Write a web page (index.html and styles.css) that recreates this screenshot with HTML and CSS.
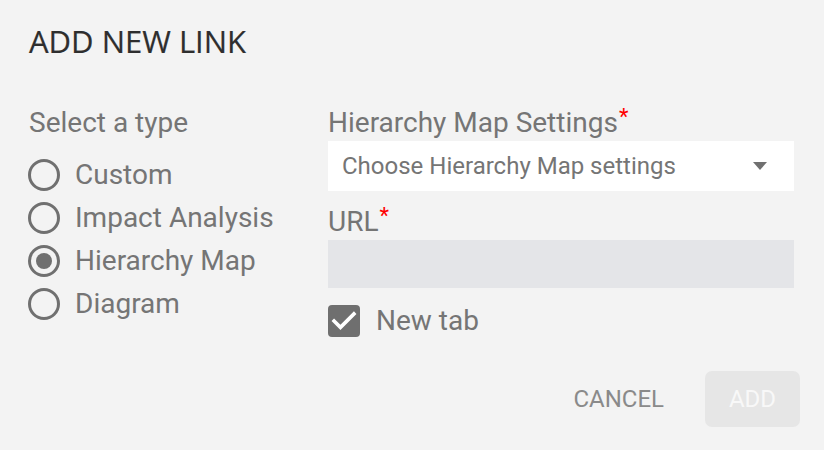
FILE: index.html
```html
<!DOCTYPE html>
<html>
<head>
<meta charset="utf-8">
<link rel="stylesheet" href="styles.css">
</head>
<body>
<div class="dialog">
  <h1 class="title">ADD NEW LINK</h1>
  <div class="content">
    <div class="types">
      <div class="label">Select a type</div>
      <div class="radios">
        <div class="radio-row"><span class="radio"></span><span class="radio-text">Custom</span></div>
        <div class="radio-row"><span class="radio"></span><span class="radio-text">Impact Analysis</span></div>
        <div class="radio-row"><span class="radio checked"></span><span class="radio-text">Hierarchy Map</span></div>
        <div class="radio-row"><span class="radio"></span><span class="radio-text">Diagram</span></div>
      </div>
    </div>
    <div class="fields">
      <div class="label">Hierarchy Map Settings<span class="req">*</span></div>
      <div class="select">
        <span class="select-text">Choose Hierarchy Map settings</span>
        <span class="arrow"></span>
      </div>
      <div class="label url-label">URL<span class="req">*</span></div>
      <div class="input"></div>
      <div class="check-row">
        <span class="checkbox">
          <svg viewBox="3 3 18 18" width="32" height="32"><path d="M10 17l-5-5 1.41-1.41L10 14.17l7.59-7.59L19 8l-9 9z" fill="#fff"/></svg>
        </span>
        <span class="check-text">New tab</span>
      </div>
    </div>
  </div>
  <div class="actions">
    <button class="btn cancel">CANCEL</button>
    <button class="btn add">ADD</button>
  </div>
</div>
</body>
</html>
```

FILE: styles.css
```css
html, body {
  margin: 0;
  padding: 0;
  background: #f3f3f3;
}
body {
  width: 824px;
  height: 450px;
  overflow: hidden;
  font-family: Roboto, "Liberation Sans", sans-serif;
  color: #757575;
}
.dialog {
  padding: 20px 24px 0 29px;
}
.title {
  margin: 0;
  font-family: "Open Sans", "Liberation Sans", sans-serif;
  font-weight: 400;
  font-size: 31px;
  line-height: 42px;
  color: #2e2e2e;
  -webkit-text-stroke: 0.2px #2e2e2e;
}
.content {
  display: flex;
  margin-top: 43.4px;
  padding-right: 6px;
}
.types {
  width: 299px;
  flex: none;
}
.fields {
  flex: 1;
  display: flex;
  flex-direction: column;
}
.label {
  font-size: 28px;
  line-height: 36px;
  color: #757575;
  white-space: nowrap;
}
.req {
  color: #ff0000;
  font-size: 22px;
  line-height: 0;
  vertical-align: 8px;
  margin-left: 1px;
}
.radios {
  margin-top: 12.5px;
  display: flex;
  flex-direction: column;
}
.radio-row {
  height: 43px;
  display: flex;
  align-items: center;
}
.radio {
  box-sizing: border-box;
  width: 32px;
  height: 32px;
  border: 3.5px solid #707070;
  border-radius: 50%;
  margin-left: -1px;
  display: flex;
  align-items: center;
  justify-content: center;
  flex: none;
}
.radio.checked::after {
  content: "";
  width: 16px;
  height: 16px;
  border-radius: 50%;
  background: #707070;
}
.radio-text {
  margin-left: 15px;
  font-size: 28px;
  line-height: 36px;
}
.select {
  height: 50px;
  background: #ffffff;
  display: flex;
  align-items: center;
  justify-content: space-between;
  padding: 0 27px 0 14px;
}
.select-text {
  font-size: 24px;
  color: #757575;
}
.arrow {
  width: 0;
  height: 0;
  border-left: 7px solid transparent;
  border-right: 7px solid transparent;
  border-top: 8px solid #707070;
}
.url-label {
  margin-top: 13px;
}
.input {
  height: 48px;
  background: #e4e5e8;
}
.check-row {
  margin-top: 17px;
  display: flex;
  align-items: center;
  height: 32px;
}
.checkbox {
  width: 32px;
  height: 32px;
  border-radius: 4px;
  background: #6f6f6f;
  display: block;
  flex: none;
}
.checkbox svg {
  display: block;
}
.check-text {
  margin-left: 16px;
  font-size: 28px;
  line-height: 36px;
}
.actions {
  display: flex;
  justify-content: flex-end;
  gap: 17px;
  margin-top: 34px;
}
.btn {
  font-family: Roboto, "Liberation Sans", sans-serif;
  font-size: 24px;
  border: none;
  height: 56px;
  padding: 0 24px;
  border-radius: 7px;
  background: transparent;
  cursor: pointer;
}
.cancel {
  color: #8a8a8a;
}
.add {
  background: #e6e6e6;
  color: #f8f8f8;
  width: 95px;
  padding: 0;
}
```
